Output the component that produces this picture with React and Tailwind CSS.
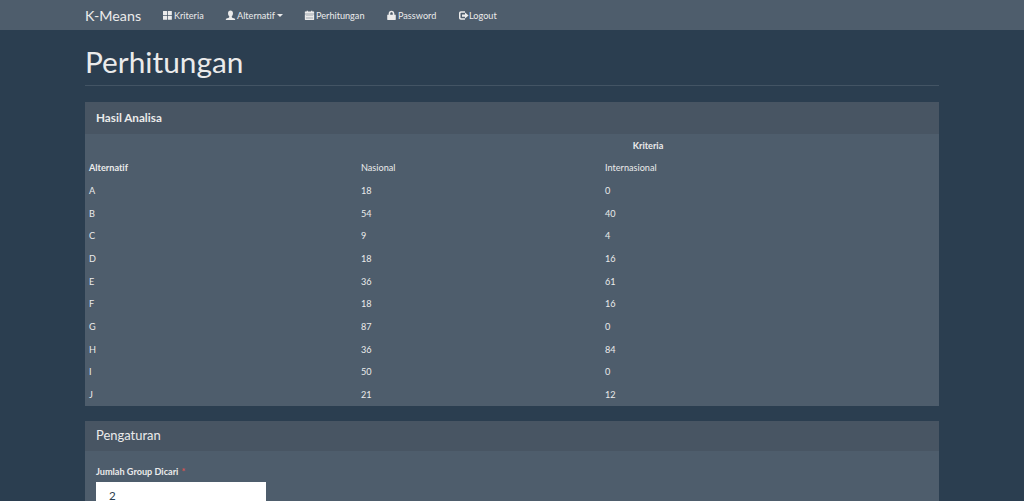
import React from 'react';

const rows = [
  { name: 'A', nasional: 18, internasional: 0 },
  { name: 'B', nasional: 54, internasional: 40 },
  { name: 'C', nasional: 9, internasional: 4 },
  { name: 'D', nasional: 18, internasional: 16 },
  { name: 'E', nasional: 36, internasional: 61 },
  { name: 'F', nasional: 18, internasional: 16 },
  { name: 'G', nasional: 87, internasional: 0 },
  { name: 'H', nasional: 36, internasional: 84 },
  { name: 'I', nasional: 50, internasional: 0 },
  { name: 'J', nasional: 21, internasional: 12 },
];

const Icon = ({ children }) => (
  <svg viewBox="0 0 12 12" className="h-[9px] w-[9px] shrink-0 overflow-visible" fill="currentColor">
    {children}
  </svg>
);

const GridIcon = () => (
  <Icon>
    <rect x="0" y="0" width="5.4" height="5.3" rx="0.4" />
    <rect x="6.4" y="0" width="5.4" height="5.3" rx="0.4" />
    <rect x="0" y="6.4" width="5.4" height="5.3" rx="0.4" />
    <rect x="6.4" y="6.4" width="5.4" height="5.3" rx="0.4" />
  </Icon>
);

const UserIcon = () => (
  <Icon>
    <path d="M6 -.6C4 -.6 2.700.8 2.700 2.900c0 1.700.6 3.200 1.600 4.100v1.100c0 .4-.2.600-.6.800L.7 10.100c-.7.3-1 .9-1 1.800h12.600c0-.9-.3-1.500-1-1.800L8.300 8.900c-.4-.2-.6-.4-.6-.8V7c1-.9 1.600-2.400 1.600-4.100C9.300.8 8 -.6 6 -.6z" />
  </Icon>
);

const CalendarIcon = () => (
  <Icon>
    <path d="M.4.8h1.800V-.4h1.700V.8h4.200V-.4h1.700V.8h1.800c.4 0 .6.2.6.6v2.200H-.2V1.400c0-.4.2-.6.600-.6z" />
    <path
      fillRule="evenodd"
      d="M-.2 4.200h12.400v7.100c0 .4-.2.600-.6.600H.4c-.4 0-.6-.2-.6-.6zM1.200 6.100h9.600v-.4H1.200zM1.200 8.400h9.600V8H1.200zM1.200 10.600h9.600v-.4H1.200z"
    />
  </Icon>
);

const LockIcon = () => (
  <Icon>
    <path
      fillRule="evenodd"
      d="M.9 4.900h1.300V3.700C2.200 1.200 3.700-.5 6-.5s3.800 1.700 3.800 4.200v1.200h1.300c.4 0 .6.2.6.6v5.800c0 .4-.2.600-.6.600H.9c-.4 0-.6-.2-.6-.6V5.500c0-.4.2-.6.6-.6zM4.300 4.900h3.400V3.700c0-1.300-.6-2-1.700-2s-1.700.7-1.700 2z"
    />
  </Icon>
);

const LogoutIcon = () => (
  <Icon>
    <path d="M8 .4H2.600C1 .4 0 1.400 0 3v6c0 1.600 1 2.600 2.600 2.600H8V9.600H2.900c-.6 0-.9-.3-.9-.9V3.300c0-.6.3-.9.9-.9H8z" />
    <path d="M8 2 12.800 6 8 10V7.500H4v-3h4z" />
  </Icon>
);

const NavItem = ({ icon, label, caret, className }) => (
  <a href="#" className={`flex items-center ${className}`}>
    {icon}
    <span>{label}</span>
    {caret && (
      <span className="mt-px border-x-[3px] border-t-[3px] border-x-transparent border-t-[#ebebeb]" />
    )}
  </a>
);

const Navbar = () => (
  <nav className="h-[30px] bg-[#4e5d6c]">
    <div className="mx-auto flex h-full w-[854px] items-center">
      <a href="#" className="w-[78px] text-[14.25px]">K-Means</a>
      <NavItem icon={<GridIcon />} label="Kriteria" className="w-[63px] gap-[2px]" />
      <NavItem icon={<UserIcon />} label="Alternatif" caret className="w-[79px] gap-[2px]" />
      <NavItem icon={<CalendarIcon />} label="Perhitungan" className="w-[82px] gap-[2px]" />
      <NavItem icon={<LockIcon />} label="Password" className="w-[72px] gap-[2px]" />
      <NavItem icon={<LogoutIcon />} label="Logout" className="gap-px" />
    </div>
  </nav>
);

const ResultTable = () => (
  <table className="w-full table-fixed text-left">
    <colgroup>
      <col className="w-[272px]" />
      <col className="w-[244px]" />
      <col />
    </colgroup>
    <thead>
      <tr className="h-[22.65px]">
        <th />
        <th colSpan={2} className="text-center font-bold">Kriteria</th>
      </tr>
      <tr className="h-[22.65px]">
        <th className="pl-1 font-bold">Alternatif</th>
        <td className="pl-1">Nasional</td>
        <td className="pl-1">Internasional</td>
      </tr>
    </thead>
    <tbody>
      {rows.map(row => (
        <tr key={row.name} className="h-[22.65px]">
          <td className="pl-1">{row.name}</td>
          <td className="pl-1">{row.nasional}</td>
          <td className="pl-1">{row.internasional}</td>
        </tr>
      ))}
    </tbody>
  </table>
);

const App = () => {
  return (
    <div className="h-[501px] overflow-hidden bg-[#2b3e50] font-['Lato',sans-serif] text-[9.15px] leading-[13px] text-[#ebebeb] [font-variant-ligatures:none]">
      <Navbar />
      <main className="mx-auto w-[854px]">
        <h1 className="mb-4 flex h-14 items-center border-b border-[#435464] pt-2 text-[29.8px] leading-8">
          Perhitungan
        </h1>
        <section className="mb-[15px] bg-[#4e5d6c]">
          <h3 className="flex h-8 items-center bg-[#485563] px-[11px] pb-px text-[11.7px] font-bold">
            Hasil Analisa
          </h3>
          <ResultTable />
        </section>
        <section className="bg-[#4e5d6c]">
          <h3 className="flex h-[30px] items-center bg-[#485563] px-[11px] text-[12.95px]">
            Pengaturan
          </h3>
          <form className="px-[11px] pt-[14px]">
            <label className="block font-bold">
              Jumlah Group Dicari<span className="ml-px text-[#d9534f]"> *</span>
            </label>
            <input
              type="text"
              defaultValue="2"
              className="mt-1 block h-[28px] w-[170px] bg-white pl-[13px] text-[11.6px] text-[#2b3e50]"
            />
          </form>
        </section>
      </main>
    </div>
  );
};

export default App;
